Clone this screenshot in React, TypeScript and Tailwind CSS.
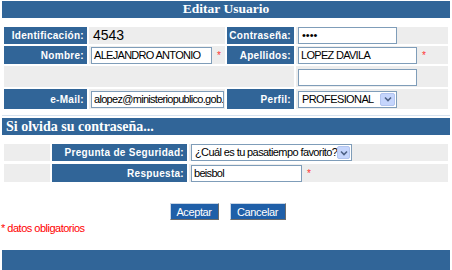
import React from 'react';

const blue = 'bg-[#316598]';

const Label: React.FC<{ text: string; className?: string }> = ({ text, className = '' }) => (
    <div className={`${blue} flex items-center justify-end pr-[3px] text-[10px] font-bold text-white tracking-[0.3px] ${className}`}>
        {text}
    </div>
);

const Field: React.FC<{ value?: string; w: string; pw?: boolean }> = ({ value = '', w, pw }) => (
    <div className={`${w} h-[17px] bg-white border border-[#7f9db9] flex items-center pl-[2px] text-[11px] tracking-[-0.7px] text-black overflow-hidden whitespace-nowrap`}>
        {pw ? <span className="text-[11px] tracking-[0px] pl-px">••••</span> : value}
    </div>
);

const Select: React.FC<{ value: string; w: string }> = ({ value, w }) => (
    <div className={`${w} h-[17px] bg-white border border-[#7f9db9] flex items-center justify-between pl-[3px] pr-px text-[11px] tracking-[-0.6px] text-black whitespace-nowrap`}>
        <span>{value}</span>
        <div className="w-[15px] h-[13px] rounded-[2px] bg-[#c5d5fc] border border-[#b2c4ef] flex items-center justify-center">
            <svg width="8" height="6" viewBox="0 0 8 6">
                <path d="M1 1.5 L4 4.5 L7 1.5" fill="none" stroke="#4d6185" strokeWidth="1.6" />
            </svg>
        </div>
    </div>
);

const Req = () => <span className="text-[#ff3333] text-[10px] ml-[5px]">*</span>;

export default function App() {
    return (
        <div className="w-[452px] h-[270px] bg-white flex flex-col overflow-hidden" style={{ fontFamily: '"Liberation Sans", Arial, sans-serif' }}>
            <div className={`${blue} mx-[2px] mt-px h-[17px] flex items-center justify-center text-white font-bold text-[13.5px]`} style={{ fontFamily: '"Liberation Serif", serif' }}>
                Editar Usuario
            </div>

            <div className="mt-[9px] px-[4px] grid grid-cols-[83px_136px_67px_1fr] gap-[2px] grid-rows-[17px_18px_21px_20px]">
                <Label text="Identificación:" />
                <div className="bg-[#ededed] flex items-center pl-[4px] text-[14px] text-black">4543</div>
                <Label text="Contraseña:" />
                <div className="bg-[#ededed] flex items-center pl-[2px]"><Field w="w-[99px]" pw /></div>

                <Label text="Nombre:" />
                <div className="bg-[#ededed] flex items-center pl-[2px]"><Field w="w-[121px]" value="ALEJANDRO ANTONIO" /><Req /></div>
                <Label text="Apellidos:" />
                <div className="bg-[#ededed] flex items-center pl-[2px]"><Field w="w-[119px]" value="LOPEZ DAVILA" /><Req /></div>

                <div className="bg-[#ededed] col-span-3" />
                <div className="bg-[#ededed] flex items-center pl-[2px] pt-[2px]"><Field w="w-[119px]" /></div>

                <Label text="e-Mail:" />
                <div className="bg-[#ededed] flex items-center pl-[2px]"><Field w="w-[133px]" value="alopez@ministeriopublico.gob." /></div>
                <Label text="Perfil:" />
                <div className="bg-[#ededed] flex items-center pl-[2px]"><Select w="w-[99px]" value="PROFESIONAL" /></div>
            </div>

            <div className="mx-[2px] mt-[6px] h-px bg-[#d6e2ef]" />

            <div className={`${blue} mx-[2px] mt-[2px] h-[17px] flex items-center pl-[4px] text-white font-bold text-[14px]`} style={{ fontFamily: '"Liberation Serif", serif' }}>
                Si olvida su contraseña...
            </div>

            <div className="mt-[9px] px-[4px] grid grid-cols-[46px_135px_1fr] gap-x-[2px] gap-y-[3px] grid-rows-[17px_18px]">
                <div className="bg-[#ededed]" />
                <Label text="Pregunta de Seguridad:" />
                <div className="bg-[#ededed] flex items-center pl-[2px]"><Select w="w-[161px]" value="¿Cuál es tu pasatiempo favorito?" /></div>

                <div className="bg-[#ededed]" />
                <Label text="Respuesta:" />
                <div className="bg-[#ededed] flex items-center pl-[2px]"><Field w="w-[111px]" value="beisbol" /><Req /></div>
            </div>

            <div className="mt-[21px] flex justify-center gap-[11px] pl-[3px]">
                <button className="h-[17px] w-[49px] bg-[#1f5fa8] text-white text-[11px] tracking-[-0.4px] border border-t-[#c9d6e6] border-l-[#c9d6e6] border-r-[#6b6b6b] border-b-[#6b6b6b]">Aceptar</button>
                <button className="h-[17px] w-[56px] bg-[#1f5fa8] text-white text-[11px] tracking-[-0.4px] border border-t-[#c9d6e6] border-l-[#c9d6e6] border-r-[#6b6b6b] border-b-[#6b6b6b]">Cancelar</button>
            </div>

            <div className="pl-px mt-px text-[11px] leading-[14px] tracking-[-0.5px] text-[#ff0000]">* datos obligatorios</div>

            <div className={`${blue} mx-[2px] mt-[15px] flex-1`} />
        </div>
    );
}
